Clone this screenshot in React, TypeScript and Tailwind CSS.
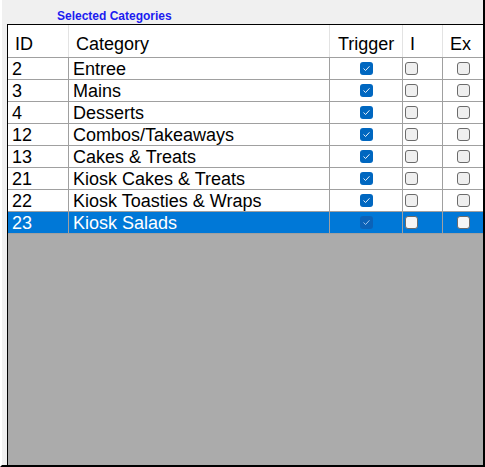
import React from "react";

type Row = { id: number; name: string; trigger: boolean; i: boolean; ex: boolean };

const rows: Row[] = [
  { id: 2, name: "Entree", trigger: true, i: false, ex: false },
  { id: 3, name: "Mains", trigger: true, i: false, ex: false },
  { id: 4, name: "Desserts", trigger: true, i: false, ex: false },
  { id: 12, name: "Combos/Takeaways", trigger: true, i: false, ex: false },
  { id: 13, name: "Cakes & Treats", trigger: true, i: false, ex: false },
  { id: 21, name: "Kiosk Cakes & Treats", trigger: true, i: false, ex: false },
  { id: 22, name: "Kiosk Toasties & Wraps", trigger: true, i: false, ex: false },
  { id: 23, name: "Kiosk Salads", trigger: true, i: false, ex: false },
];

function Check({ checked, selected }: { checked: boolean; selected: boolean }) {
  if (checked) {
    return (
      <div
        className={
          "w-[13px] h-[13px] rounded-[3px] flex items-center justify-center " +
          (selected ? "bg-[#0b62b8]" : "bg-[#0067c0]")
        }
      >
        <svg width="9" height="9" viewBox="0 0 9 9">
          <path
            d="M1.8 4.8 L3.6 6.5 L7.2 2.6"
            fill="none"
            stroke={selected ? "#9fc3ec" : "#e6f0fa"}
            strokeWidth="1"
            strokeLinecap="round"
            strokeLinejoin="round"
          />
        </svg>
      </div>
    );
  }
  return (
    <div
      className={
        "w-[13px] h-[13px] rounded-[3px] border border-[#6b6b6b] " +
        (selected ? "bg-[#f6f6f6]" : "bg-[#efefef]")
      }
    />
  );
}

export default function App() {
  const font = { fontFamily: '"Liberation Sans", Arial, sans-serif' };
  return (
    <div
      className="w-[485px] h-[467px] bg-[#f0f0f0] border-l-2 border-l-white border-r-2 border-r-black border-b-2 border-b-black pl-[5px] flex flex-col"
      style={font}
    >
      <div className="h-[24px] pl-[50px] pt-[10px] text-[12px] leading-[12px] font-bold text-[#1c1cf0] shrink-0">
        Selected Categories
      </div>
      <div className="w-[476px] flex-1 border-l border-t border-black bg-[#ababab] flex flex-col">
        <div className="grid grid-cols-[61px_261px_73px_40px_40px] h-[33px] bg-white border-b border-[#a0a0a0] text-[18px] leading-[20px] text-black">
          <div className="border-r border-[#e3e3e3] pl-[7px] pt-[9px]">ID</div>
          <div className="border-r border-[#e3e3e3] pl-[7px] pt-[9px]">Category</div>
          <div className="border-r border-[#e3e3e3] pl-[8px] pt-[9px]">Trigger</div>
          <div className="border-r border-[#e3e3e3] pl-[7px] pt-[9px]">I</div>
          <div className="pl-[7px] pt-[9px]">Ex</div>
        </div>
        {rows.map((r, idx) => {
          const sel = idx === rows.length - 1;
          return (
            <div
              key={r.id}
              className={
                "grid grid-cols-[61px_261px_73px_40px_40px] h-[22px] border-b border-[#a0a0a0] text-[18px] leading-[21px] " +
                (sel ? "bg-[#0078d7] text-white" : "bg-white text-black")
              }
            >
              <div className="border-r border-[#a0a0a0] pl-[4px] pt-[1px] whitespace-nowrap overflow-hidden">{r.id}</div>
              <div className="border-r border-[#a0a0a0] pl-[4px] pt-[1px] whitespace-nowrap overflow-hidden">{r.name}</div>
              <div className="border-r border-[#a0a0a0] flex items-center justify-center">
                <Check checked={r.trigger} selected={sel} />
              </div>
              <div className="border-r border-[#a0a0a0] flex items-center pl-[2px]">
                <Check checked={r.i} selected={sel} />
              </div>
              <div className="flex items-center justify-center">
                <Check checked={r.ex} selected={sel} />
              </div>
            </div>
          );
        })}
      </div>
    </div>
  );
}
